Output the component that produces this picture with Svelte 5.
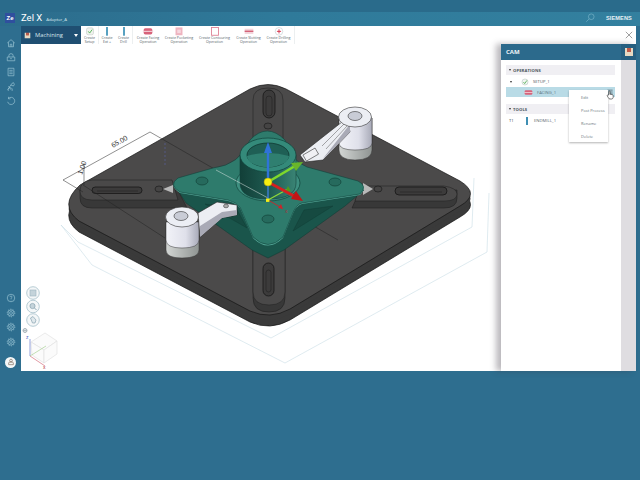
<script>
	const tools = [
		{ label: ['Create', 'Setup'], w: 17, icon: 'setup' },
		{ label: ['Create', 'Ext +'], w: 17, icon: 'mill', sep: true },
		{ label: ['Create', 'Drill'], w: 17, icon: 'mill' },
		{ label: ['Create Facing', 'Operation'], w: 31, icon: 'facing', sep: true },
		{ label: ['Create Pocketing', 'Operation'], w: 32, icon: 'pocket' },
		{ label: ['Create Contouring', 'Operation'], w: 39, icon: 'contour' },
		{ label: ['Create Slotting', 'Operation'], w: 29, icon: 'slot' },
		{ label: ['Create Drilling', 'Operation'], w: 31, icon: 'drill' }
	];
	const menu = ['Edit', 'Post Process', 'Rename', 'Delete'];

	const plate = 'M250 89 Q268 80 286 89 L460 181 Q481 194 460 206 L290 309 Q270 320 250 311 L79 221 Q58 205 80 185 Z';
	const star = 'M178 178 L213 168 Q240 165 250 140 Q267 122 285 140 Q290 160 307 167 L358 181 Q368 186 360 194 L302 203 Q296 204 292 215 L283 237 Q268 252 253 237 L240 207 Q236 202 228 200 L180 192 Q168 185 178 178 Z';
</script>

<div class="app">
	<header class="top">
		<div class="logo">Ze</div>
		<span class="title">Zel X</span>
		<span class="file">Adapter_A</span>
		<svg class="search" viewBox="0 0 12 12"><circle cx="7.5" cy="4.5" r="3.4" /><path d="M5 7 L1.5 10.5" /></svg>
		<span class="brand">SIEMENS</span>
	</header>

	<div class="middle">
		<nav class="rail">
			<div class="rail-group">
				<svg viewBox="0 0 12 12"><path d="M1.5 6 L6 2 L10.5 6 M3 5 V10.5 H9 V5 M5 10.5 V7.5 H7 V10.5" /></svg>
				<svg viewBox="0 0 12 12"><path d="M1.5 6 H10.5 V10.5 H1.5 Z M3.5 6 V4 Q3.5 2 6 2 Q8.5 2 8.5 4 V6 M5 8 H7" /></svg>
				<svg viewBox="0 0 12 12"><path d="M2.5 1.5 H9.5 V10.5 H2.5 Z M4 4 H8 M4 6 H8 M4 8 H8" /></svg>
				<svg viewBox="0 0 12 12"><path d="M2 10.5 L7 3 L9 2 L10 4 L9 6 L6 5 M3 6 L6 10.5 M5 8 A2.5 2.5 0 1 0 5.1 8" /></svg>
				<svg viewBox="0 0 12 12"><path d="M3 3 A4.3 4.3 0 1 1 2 7 M3 1 V3.4 H5.4" /></svg>
			</div>
			<div class="rail-group lower">
				<svg viewBox="0 0 12 12"><circle cx="6" cy="6" r="4.5" /><path d="M4.6 4.8 Q5 3.6 6.2 3.7 Q7.6 4 7.2 5.2 Q6 6 6 7 M6 8 V8.7" /></svg>
				{#each [1, 2, 3] as gear (gear)}
					<svg viewBox="0 0 12 12"><circle cx="6" cy="6" r="1.7" /><circle cx="6" cy="6" r="3.7" /><circle cx="6" cy="6" r="4.6" stroke-dasharray="1.4 1.49" /></svg>
				{/each}
			</div>
			<div class="user">
				<svg viewBox="0 0 12 12"><circle cx="6" cy="3.8" r="2" /><path d="M2.5 10 V7.5 Q2.5 6.3 4 6.2 H8 Q9.5 6.3 9.5 7.5 V10 Z" /></svg>
			</div>
		</nav>

		<main class="main">
			<div class="toolbar">
				<button class="mode">
					<svg viewBox="0 0 10 10"><path d="M1 1 H3 V4 H7 V1 H9 V9 H1 Z" fill="#e7d9c2" /><path d="M3 1 V5 H7 V1" fill="#c05a48" /></svg>
					<span>Machining</span>
					<i class="caret"></i>
				</button>
				{#each tools as tool (tool.label.join())}
					<div class="tool" class:sep={tool.sep} style="width: {tool.w}px">
						<svg viewBox="0 0 14 10">
							{#if tool.icon === 'setup'}
								<rect x="3" y="1" width="8" height="8" rx="2" fill="#f0f2ee" stroke="#b9c6c0" stroke-width=".6" />
								<path d="M5 5 L6.6 7 L9.5 3" fill="none" stroke="#4caf50" stroke-width="1" />
							{:else if tool.icon === 'mill'}
								<rect x="6" y="0" width="2" height="10" fill="#3f93b8" />
							{:else if tool.icon === 'facing'}
								<rect x="2" y="1.5" width="10" height="7" rx="2" fill="#d7637a" />
								<rect x="1" y="4.4" width="12" height="1.2" fill="#f5d8de" />
							{:else if tool.icon === 'pocket'}
								<rect x="3" y="0.5" width="8" height="9" fill="#eeb4c0" />
								<rect x="5" y="3" width="4" height="4" fill="#f6d8df" />
							{:else if tool.icon === 'contour'}
								<rect x="3" y="0.5" width="8" height="9" fill="#fff" stroke="#dd7f92" stroke-width="1" />
							{:else if tool.icon === 'slot'}
								<rect x="2" y="2" width="10" height="6" fill="#f3d5dc" />
								<rect x="2" y="4.2" width="10" height="1.4" fill="#cf5068" />
							{:else}
								<circle cx="7" cy="5" r="4.4" fill="#fff" stroke="#b8c3c8" stroke-width=".6" />
								<path d="M7 2.6 V7.4 M4.6 5 H9.4" stroke="#d0263f" stroke-width="1" />
							{/if}
						</svg>
						<span>{tool.label[0]}</span>
						<span>{tool.label[1]}</span>
					</div>
				{/each}
				<div class="tool-end"></div>
				<svg class="close" viewBox="0 0 10 10"><path d="M1 1 L9 9 M9 1 L1 9" /></svg>
			</div>

			<div class="work">
				<div class="canvas">
					<svg class="model" viewBox="21 44 480 327">
						<defs>
							<linearGradient id="boss">
								<stop offset="0" stop-color="#123f38" />
								<stop offset=".55" stop-color="#1f5c52" />
								<stop offset="1" stop-color="#3a8475" />
							</linearGradient>
							<linearGradient id="clamp">
								<stop offset="0" stop-color="#f2f3f8" />
								<stop offset=".6" stop-color="#dfe0ea" />
								<stop offset="1" stop-color="#a8aab8" />
							</linearGradient>
							<linearGradient id="clampBase">
								<stop offset="0" stop-color="#d3d6d4" />
								<stop offset="1" stop-color="#8f9492" />
							</linearGradient>
						</defs>

						<!-- wire stock box -->
						<g fill="none" stroke="#c9dde6" stroke-width=".6">
							<path d="M61 225 L78 242 L271 338 L472 227 L474 178" />
							<path d="M61 225 L92 265 L285 363 L487 252 L489 193" />
						</g>

						<!-- plate -->
						<path d={plate} transform="translate(0 11)" fill="#3a3a3a" stroke="#111" stroke-width=".7" />
						<path d={plate} transform="translate(0 5)" fill="#3a3a3a" />
						<path d={plate} fill="#4b4a4a" stroke="#161616" stroke-width=".7" />

						<!-- arms with slots -->
						<g fill="#383838" stroke="#1c1c1c" stroke-width=".5">
							<path d="M253 245 V298 Q253 312 269 312 Q285 312 285 298 V245 Z" />
							<path d="M187 208 H92 Q80 208 80 198 V190 H178 Z" />
							<path d="M352 208 H444 Q457 208 457 198 V190 H360 Z" />
						</g>
						<g fill="#4a4949" stroke="#1f1f1f" stroke-width=".5">
							<path d="M253 150 V100 Q253 88 268 88 Q283 88 283 100 V150 Z" />
							<path d="M253 245 V292 Q253 305 269 305 Q285 305 285 292 V245 Z" />
							<path d="M178 200 H92 Q80 200 80 191 Q80 181 92 180 H172 Z" />
							<path d="M360 186 H444 Q457 188 457 194 Q457 201 444 201 H355 Z" />
						</g>
						<g fill="#3c3b3b" stroke="#111" stroke-width=".7">
							<rect x="263" y="90" width="12" height="28" rx="6" />
							<rect x="263" y="263" width="11" height="33" rx="5.500" />
							<rect x="92" y="187" width="50" height="6.500" rx="3.200" />
							<rect x="395" y="187" width="52" height="8" rx="4" />
						</g>
						<g fill="none" stroke="#1c1c1c" stroke-width=".5">
							<rect x="266" y="96" width="6" height="20" rx="3" />
							<rect x="266" y="270" width="5" height="22" rx="2.500" />
							<path d="M97 191 H138 M400 192 H442" />
						</g>
						<g fill="#454444" stroke="#151515" stroke-width=".6">
							<ellipse cx="159" cy="189" rx="4" ry="3" />
							<ellipse cx="378" cy="189" rx="4" ry="3" />
							<ellipse cx="268" cy="252" rx="4" ry="3" />
							<ellipse cx="268" cy="126" rx="4" ry="3" />
						</g>
						<path d="M163 189 L173 185 V193 Z M363 183 L373 189 L363 195 Z" fill="#b9b9b9" />

						<!-- dimension lines -->
						<g fill="none" stroke="#222" stroke-width=".5">
							<path d="M63 180 L150 132 L338 240" />
							<path d="M83 185 L165 238" />
							<path d="M84 163 V185 M63 180 L83 192" />
						</g>
						<path d="M165 143 V167" stroke="#5a63a8" stroke-width=".6" stroke-dasharray="2 2" />
						<text class="dim" transform="translate(113 148) rotate(-30)">65.00</text>
						<text class="dim" transform="translate(82 175) rotate(-70)">1.00</text>

						<!-- right clamp sits behind the body -->
						<path d="M339 118 V150 Q339 160 355 160 Q372 160 372 150 V118 Z" fill="url(#clampBase)" stroke="#333" stroke-width=".5" />
						<path d="M339 118 V143 Q339 150 355 150 Q372 150 372 143 V118 Z" fill="url(#clamp)" stroke="#333" stroke-width=".5" />
						<path d="M347 118 L300 155 L305 162 L323 160 L350 132 Z" fill="#eceef3" stroke="#222" stroke-width=".6" />
						<path d="M350 124 L325 156 L322 160 L350 132 Z" fill="#a9aab6" />
						<path d="M344 124 L322 146 M347 126 L326 149" stroke="#555" stroke-width=".5" />
						<ellipse cx="355" cy="117" rx="16.500" ry="10" fill="#eceef4" stroke="#333" stroke-width=".6" />
						<ellipse cx="355" cy="116" rx="7" ry="4.500" fill="#c9ccd6" stroke="#333" stroke-width=".6" />

						<!-- green body -->
						<path d="M175 186 L186 203 L252 250 L268 258 L284 250 L345 206 L364 190 Z" fill="#1a554b" stroke="#0f3a33" stroke-width=".5" />
						<path d={star} transform="translate(0 1)" fill="#55a999" />
						<path d={star} fill="#2e7b6c" stroke="#10423a" stroke-width=".6" />
						<path d="M205 204 L236 208 L247 228 Z M304 210 L333 206 L293 231 Z" fill="#164a41" stroke="#0f3a33" stroke-width=".4" />
						<g fill="#266a5d" stroke="#0f3a33" stroke-width=".6">
							<ellipse cx="202" cy="181" rx="6" ry="4" />
							<ellipse cx="335" cy="182" rx="6" ry="4" />
							<ellipse cx="268" cy="219" rx="6" ry="4" />
						</g>

						<!-- centre boss -->
						<ellipse cx="268" cy="183" rx="32" ry="18" fill="#3e8f80" stroke="#10423a" stroke-width=".7" />
						<path d="M240 155 V183 Q240 199 268 199 Q296 199 296 183 V155 Z" fill="url(#boss)" stroke="#10423a" stroke-width=".6" />
						<ellipse cx="268" cy="155" rx="28" ry="17" fill="#348a7a" stroke="#10423a" stroke-width=".7" />
						<ellipse cx="268" cy="155" rx="21" ry="12" fill="#1f5f55" stroke="#0b2f2a" stroke-width=".7" />
						<path d="M247 156 A21 11 0 0 0 289 156 Q268 150 247 156 Z" fill="#2f7f70" />

						<!-- left clamp -->
						<path d="M166 222 V250 Q166 258 182 258 Q199 258 199 250 V222 Z" fill="url(#clampBase)" stroke="#333" stroke-width=".5" />
						<path d="M166 222 V240 Q166 248 182 248 Q199 248 199 240 V222 Z" fill="url(#clamp)" stroke="#333" stroke-width=".5" />
						<path d="M198 213 L217 202 L237 205 L237 215 L222 218 L200 237 Z" fill="#eceef3" stroke="#222" stroke-width=".6" />
						<path d="M200 226 L222 212 L237 210 V215 L222 218 L200 237 Z" fill="#a9aab6" />
						<ellipse cx="182" cy="217" rx="16.500" ry="10" fill="#eceef4" stroke="#333" stroke-width=".6" />
						<ellipse cx="181" cy="216" rx="7" ry="4.500" fill="#c9ccd6" stroke="#333" stroke-width=".6" />
						<ellipse cx="226" cy="206" rx="2.500" ry="1.800" fill="#aaa" stroke="#222" stroke-width=".5" />
						<rect x="304" y="151" width="14" height="7" transform="rotate(-30 311 155)" fill="#f0f0f4" stroke="#222" stroke-width=".5" />

						<path d="M216 170 L268 198" stroke="#dfe8e6" stroke-width=".5" fill="none" />

						<!-- triads -->
						<path d="M268 200 V182" stroke="#3d7fd6" stroke-width="1.400" />
						<path d="M268 200 L288 189" stroke="#8ed83a" stroke-width="1.400" />
						<path d="M268 200 L282 208" stroke="#c8262a" stroke-width=".9" />
						<path d="M288 186 L285 192 L291 191 Z" fill="#4f9c1c" />
						<path d="M283 209 L278 208 L281 204 Z" fill="#c8262a" />
						<rect x="266" y="198.500" width="3.400" height="3.400" fill="#f2ee1a" />
						<text class="axis" x="285" y="213">x</text>

						<path d="M268 182 V150" stroke="#2f73d8" stroke-width="2.400" />
						<path d="M268 142 L264 153 H272 Z" fill="#2f73d8" />
						<path d="M268 182 L295 166" stroke="#7ed82c" stroke-width="2.600" />
						<path d="M303 162 L291 163 L296 171 Z" fill="#69b62a" />
						<path d="M268 182 L294 196" stroke="#d42020" stroke-width="3" />
						<path d="M303 201 L291 199 L296 191 Z" fill="#c01616" />
						<circle cx="268" cy="182" r="4" fill="#f6ee10" stroke="#a09a10" stroke-width=".5" />

						<!-- view buttons -->
						<g fill="#f4f7f8" stroke="#a6c0ca" stroke-width=".8">
							<circle cx="33" cy="293" r="6.300" />
							<circle cx="33" cy="306.500" r="6.300" />
							<circle cx="33" cy="320" r="6.300" />
						</g>
						<rect x="30" y="290" width="6" height="6" fill="#c4d3da" stroke="#9db4bf" stroke-width=".6" />
						<circle cx="32.500" cy="306" r="2.600" fill="#c4d3da" stroke="#86a2af" stroke-width=".7" />
						<path d="M34.500 308 L36.500 310" stroke="#86a2af" stroke-width=".9" />
						<path d="M30.500 318 L33 316.500 L36 320 L35 323 H32.500 Z" fill="#dfe8ec" stroke="#8aa5b1" stroke-width=".7" />

						<!-- view cube -->
						<circle cx="25" cy="330.500" r="2" fill="none" stroke="#8b9aa2" stroke-width=".7" />
						<path d="M25 328.500 V332.500 M23 330.500 H27" stroke="#8b9aa2" stroke-width=".5" />
						<g fill="#fbfbfb" stroke="#e2e2e2" stroke-width=".7">
							<path d="M31 342 L45 333 L57 341 L44 350 Z" />
							<path d="M31 342 L44 350 V363 L32 355 Z" />
							<path d="M44 350 L57 341 V354 L44 363 Z" />
						</g>
						<path d="M30 356 V339" stroke="#4a62c4" stroke-width=".6" />
						<path d="M30 356 L45 366" stroke="#cc5566" stroke-width=".6" />
						<path d="M30 356 L46 346" stroke="#9ccb85" stroke-width=".6" />
						<text class="axis blue" x="26" y="339">z</text>
						<text class="axis" x="43" y="369">x</text>
					</svg>
				</div>

				<aside class="panel">
					<div class="panel-head">
						<span class="panel-title">CAM</span>
						<div class="save">
							<svg viewBox="0 0 10 10"><path d="M1 1 H3 V4 H7 V1 H9 V9 H1 Z" fill="#e7d9c2" /><path d="M3 1 V5 H7 V1" fill="#c05a48" /></svg>
						</div>
					</div>
					<div class="panel-body">
						<div class="tree">
							<div class="section"><i class="down"></i>OPERATIONS</div>
							<div class="row setup">
								<i class="down small"></i>
								<svg viewBox="0 0 10 10"><circle cx="5" cy="5" r="3.800" fill="#f2f5f2" stroke="#a9bdb6" stroke-width=".6" /><path d="M3 5 L4.600 7 L7.400 3" fill="none" stroke="#4caf50" stroke-width="1" /></svg>
								<span>SETUP_1</span>
							</div>
							<div class="row facing">
								<svg viewBox="0 0 14 10"><rect x="1" y="1.500" width="12" height="7" rx="2" fill="#d7637a" /><rect x="0.500" y="4.400" width="13" height="1.200" fill="#f5d8de" /></svg>
								<span>FACING_1</span>
								<svg class="kebab" viewBox="0 0 8 8"><path d="M0.500 1.500 H7.500 M0.500 4 H7.500 M0.500 6.500 H7.500" /></svg>
							</div>
							<div class="section tools"><i class="down"></i>TOOLS</div>
							<div class="row tool-row">
								<span class="t-num">T1</span>
								<i class="mill"></i>
								<span>ENDMILL_1</span>
							</div>

							<ul class="menu">
								{#each menu as item (item)}
									<li>{item}</li>
								{/each}
							</ul>
							<svg class="hand" viewBox="0 0 10 12"><path d="M3.500 6 V2 Q3.500 1 4.300 1 Q5 1 5 2 V5 L8 5.500 Q9 5.800 9 7 V9 Q8.500 11 7 11 H5 Q3.500 11 3 9.500 L1.500 7 Q1.300 6 2.300 6 Z" /></svg>
						</div>
						<div class="gutter"></div>
					</div>
				</aside>
			</div>
		</main>
	</div>

	<footer class="bottom"></footer>
</div>

<style>
	:global(body) {
		background: #2e6e8f;
	}

	.app {
		width: 640px;
		height: 480px;
		display: flex;
		flex-direction: column;
		overflow: hidden;
		font-family: 'Open Sans', 'Liberation Sans', sans-serif;
		background: #2e6e8f;
	}

	.top {
		height: 26px;
		flex: none;
		display: flex;
		align-items: center;
		padding: 9px 0 0 5px;
		box-sizing: border-box;
		color: #fff;
		background:
			linear-gradient(to bottom, #2a6b8b 0 12px, transparent 12px),
			linear-gradient(to right, #2c6c8c, #2f7a9a 45%, #33809f);
	}

	.logo {
		width: 10px;
		height: 10px;
		display: flex;
		align-items: center;
		justify-content: center;
		background: #2f4f9e;
		font-size: 6px;
		font-weight: 700;
		font-family: 'Liberation Sans', sans-serif;
	}

	.title {
		margin-left: 6px;
		font-family: Roboto, sans-serif;
		font-size: 9.500px;
	}

	.file {
		margin-left: 4px;
		margin-top: 2px;
		font-size: 4.300px;
		color: #dcebf1;
	}

	.search {
		width: 10px;
		height: 10px;
		margin-left: auto;
		fill: none;
		stroke: #79b3c8;
		stroke-width: 0.8;
	}

	.brand {
		width: 34px;
		margin-left: 11px;
		font-size: 5.600px;
		font-weight: 700;
		letter-spacing: 0.1px;
		color: #e6f1f5;
		font-family: 'Liberation Sans', sans-serif;
	}

	.middle {
		height: 345px;
		flex: none;
		display: flex;
	}

	.rail {
		width: 21px;
		flex: none;
		display: flex;
		flex-direction: column;
		align-items: center;
		padding-top: 12px;
		box-sizing: border-box;
	}

	.rail-group {
		display: flex;
		flex-direction: column;
		align-items: center;
		gap: 4.400px;
	}

	.rail-group svg {
		width: 10px;
		height: 10px;
		fill: none;
		stroke: #9cc6d4;
		stroke-width: 0.8;
	}

	.lower {
		margin-top: auto;
	}

	.user {
		width: 11px;
		height: 11px;
		margin: 10px 0 3.500px;
		border-radius: 50%;
		background: #f4f7f8;
		display: flex;
		align-items: center;
		justify-content: center;
	}

	.user svg {
		width: 8px;
		height: 8px;
		fill: none;
		stroke: #7d6a5a;
		stroke-width: 1;
	}

	.main {
		width: 615px;
		flex: none;
		display: flex;
		flex-direction: column;
		background: #fff;
		box-shadow: 0 1px 0 #a9c4cf;
	}

	.toolbar {
		height: 18px;
		flex: none;
		display: flex;
		align-items: stretch;
	}

	.mode {
		width: 60px;
		flex: none;
		display: flex;
		align-items: center;
		gap: 4px;
		padding: 0 0 0 3px;
		border: none;
		background: #1f4f72;
		color: #d8e6ec;
		font: inherit;
		font-size: 5.800px;
	}

	.mode svg {
		width: 7px;
		height: 7px;
	}

	.caret {
		margin-left: auto;
		margin-right: 3px;
		border: 2.500px solid transparent;
		border-top: 3px solid #fff;
		border-bottom: none;
	}

	.tool {
		flex: none;
		display: flex;
		flex-direction: column;
		align-items: center;
		font-size: 3.600px;
		line-height: 3.900px;
		color: #55636a;
		white-space: nowrap;
		box-sizing: border-box;
		padding-top: 1px;
	}

	.tool svg {
		width: 14px;
		height: 10px;
		margin-bottom: 0.500px;
	}

	.sep {
		border-left: 1px solid #eceff0;
	}

	.tool-end {
		border-left: 1px solid #eceff0;
	}

	.close {
		width: 8px;
		height: 8px;
		margin: auto 3px auto auto;
		fill: none;
		stroke: #555;
		stroke-width: 0.7;
	}

	.work {
		flex: 1;
		display: flex;
		min-height: 0;
	}

	.canvas {
		width: 480px;
		flex: none;
	}

	.model {
		display: block;
		width: 480px;
		height: 327px;
	}

	.dim {
		font-size: 7px;
		fill: #333;
		font-family: 'Liberation Sans', sans-serif;
	}

	.axis {
		font-size: 5px;
		fill: #b3303a;
		font-family: 'Liberation Sans', sans-serif;
	}

	.axis.blue {
		fill: #4a62c4;
	}

	.panel {
		width: 135px;
		flex: none;
		display: flex;
		flex-direction: column;
		box-shadow: -5px 0 6px rgba(60, 55, 65, 0.35);
		position: relative;
	}

	.panel-head {
		height: 16px;
		flex: none;
		display: flex;
		align-items: center;
		justify-content: space-between;
		background: #2c6a8c;
		color: #f0f6f8;
		font-size: 6px;
		font-weight: 700;
	}

	.panel-title {
		padding-left: 5px;
	}

	.save {
		width: 15px;
		height: 100%;
		display: flex;
		align-items: center;
		justify-content: center;
		background: #265f80;
	}

	.save svg {
		width: 10px;
		height: 10px;
	}

	.panel-body {
		flex: 1;
		display: flex;
		min-height: 0;
	}

	.tree {
		width: 120px;
		flex: none;
		padding: 5px 6px 0 5px;
		box-sizing: border-box;
		position: relative;
		background: #fff;
		font-size: 4.200px;
		color: #5a676e;
	}

	.gutter {
		flex: 1;
		background: #dfdde1;
	}

	.section {
		height: 10px;
		display: flex;
		align-items: center;
		gap: 2px;
		padding-left: 3px;
		background: #f0eff3;
		font-weight: 700;
		letter-spacing: 0.1px;
		color: #4b555b;
	}

	.section.tools {
		margin-top: 7px;
	}

	.down {
		border: 1.500px solid transparent;
		border-top: 2px solid #333;
		border-bottom: none;
	}

	.down.small {
		margin: 0 9px 0 4px;
	}

	.row {
		display: flex;
		align-items: center;
	}

	.setup {
		height: 11px;
		margin-top: 1px;
		color: #4b555b;
	}

	.setup svg {
		width: 8px;
		height: 8px;
		margin-right: 4px;
	}

	.facing {
		height: 10px;
		background: #b9dbe6;
		padding-left: 18px;
		color: #5f7580;
		position: relative;
	}

	.facing svg:first-child {
		width: 9px;
		height: 7px;
		margin-right: 4px;
	}

	.kebab {
		position: absolute;
		right: 2px;
		top: 2px;
		width: 6px;
		height: 6px;
		fill: none;
		stroke: #4a5a62;
		stroke-width: 0.9;
	}

	.tool-row {
		height: 12px;
		margin-top: 0.500px;
		padding-left: 3px;
	}

	.t-num {
		width: 17px;
		color: #39454b;
	}

	.mill {
		width: 2px;
		height: 8px;
		margin-right: 6px;
		background: #3f8fb3;
	}

	.menu {
		position: absolute;
		left: 68px;
		top: 30px;
		width: 39px;
		height: 52px;
		margin: 0;
		padding: 0.500px 0 0;
		box-sizing: border-box;
		list-style: none;
		background: #fff;
		box-shadow: 0 0.500px 2px rgba(0, 0, 0, 0.3);
		font-size: 4px;
	}

	.menu li {
		height: 13px;
		line-height: 13px;
		padding-left: 12px;
		color: #6a757b;
		white-space: nowrap;
	}

	.hand {
		position: absolute;
		left: 105px;
		top: 30px;
		width: 8px;
		height: 10px;
		fill: #fff;
		stroke: #333;
		stroke-width: 0.8;
	}

	.bottom {
		flex: 1;
		background: #2e6e8f;
	}
</style>
